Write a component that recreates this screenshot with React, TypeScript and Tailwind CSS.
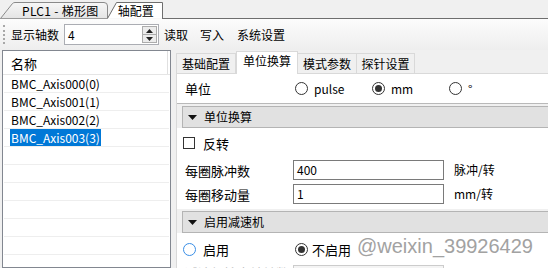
import React from 'react'

const axes = ['BMC_Axis000(0)', 'BMC_Axis001(1)', 'BMC_Axis002(2)', 'BMC_Axis003(3)']
const selected = 3

function Radio({ on, focus }: { on?: boolean; focus?: boolean }) {
  return (
    <span className={`w-[13px] h-[13px] rounded-full border bg-white flex items-center justify-center shrink-0 ${focus ? 'border-[#3a8ee6]' : 'border-[#333333]'}`}>
      {on && <span className="w-[7px] h-[7px] rounded-full bg-[#333333]" />}
    </span>
  )
}

function Triangle() {
  return (
    <svg width="9" height="5" viewBox="0 0 9 5" className="shrink-0">
      <polygon points="0,0 9,0 4.5,5" fill="#111" />
    </svg>
  )
}

function SectionHeader({ title }: { title: string }) {
  return (
    <div className="bg-[#f0f0f0] pl-[5px] pt-[2px]">
      <div className="h-[22px] flex items-center gap-[7px] pl-[5px] border border-r-0 border-[#b4b4b4] bg-[#e1e1e1]">
        <Triangle />
        <span>{title}</span>
      </div>
    </div>
  )
}

function Field({ label, value, unit }: { label: string; value: string; unit: string }) {
  return (
    <div className="h-[24px] flex items-center pl-[8px]">
      <span className="w-[108px] text-[13px]">{label}</span>
      <div className="w-[151px] h-[20px] border border-[#7a7a7a] bg-white flex items-center pl-[3px]">{value}</div>
      <span className="ml-[10px]">{unit}</span>
    </div>
  )
}

export default function App() {
  return (
    <div className="w-[548px] h-[268px] overflow-hidden bg-[#f0f0f0] flex flex-col text-[12px] leading-none text-black font-['Noto_Sans_CJK_SC',sans-serif] relative">
      {/* document tabs */}
      <div className="relative h-[19px] flex shrink-0">
        <svg className="absolute inset-0" width="548" height="19">
          <defs>
            <linearGradient id="t1" x1="0" y1="0" x2="0" y2="1">
              <stop offset="0" stopColor="#f7f7f7" />
              <stop offset="1" stopColor="#e4e4e4" />
            </linearGradient>
          </defs>
          <path d="M0.5,18.5 L12.5,3.5 Q13.5,2.5 15,2.5 L104,2.5 Q107.5,2.5 107.5,6 L107.5,18.5" fill="url(#t1)" stroke="#8a8a8a" />
          <path d="M107.5,18.5 L116.5,2.5 L162.5,2.5 L162.5,18.5" fill="#ffffff" stroke="#6e6e6e" />
          <line x1="162" y1="18.5" x2="548" y2="18.5" stroke="#6e6e6e" />
          <line x1="0" y1="18.5" x2="107" y2="18.5" stroke="#9a9a9a" />
        </svg>
        <span className="relative ml-[22px] mt-[5px] tracking-[0.3px]">PLC1 - 梯形图</span>
        <span className="relative ml-[19px] mt-[5px]">轴配置</span>
      </div>

      {/* toolbar */}
      <div className="h-[31px] shrink-0 flex items-center bg-gradient-to-b from-[#fcfcfc] to-[#eeeeee]">
        <div className="ml-[3px] h-[19px] border-l-2 border-dotted border-[#a8a8a8]" />
        <span className="ml-[6px]">显示轴数</span>
        <div className="ml-[5px] w-[95px] h-[21px] border border-[#abadb3] bg-white flex items-center">
          <span className="flex-1 pl-[3px]">4</span>
          <div className="w-[15px] h-[17px] mr-px border border-[#acacac] bg-[#ececec] flex flex-col">
            <div className="flex-1 flex items-center justify-center border-b border-[#acacac]">
              <svg width="7" height="4"><polygon points="0,4 7,4 3.5,0" fill="#222" /></svg>
            </div>
            <div className="flex-1 flex items-center justify-center">
              <svg width="7" height="4"><polygon points="0,0 7,0 3.5,4" fill="#222" /></svg>
            </div>
          </div>
        </div>
        <span className="ml-[5px]">读取</span>
        <span className="ml-[12px]">写入</span>
        <span className="ml-[13px]">系统设置</span>
      </div>

      <div className="flex-1 flex min-h-0">
        {/* axis list */}
        <div className="ml-[2px] w-[169px] border border-[#828790] bg-white flex flex-col overflow-hidden">
          <div className="h-[24px] shrink-0 flex border-b border-[#e5e5e5]">
            <span className="flex-1 pl-[8px] pt-[6px] text-[13px]">名称</span>
            <div className="w-px mr-[2px] bg-[#e0e0e0]" />
          </div>
          {Array.from({ length: 12 }).map((_, i) => (
            <div key={i} className="h-[18px] shrink-0 mx-px border-b border-[#eeeeee] flex items-center pl-[6px]">
              {axes[i] && (
                <span className={`px-px leading-[17px] ${i === selected ? 'bg-[#0078d7] text-white' : ''}`}>{axes[i]}</span>
              )}
            </div>
          ))}
        </div>

        {/* config panel */}
        <div className="ml-[5px] flex-1 flex flex-col min-w-0">
          <div className="h-[23px] shrink-0 flex items-end relative z-10">
            <div className="w-[60px] h-[20px] border border-b-0 border-[#d9d9d9] bg-[#f0f0f0] flex items-center justify-center">基础配置</div>
            <div className="w-[62px] h-[23px] -mb-px border border-b-0 border-[#d9d9d9] bg-white flex items-center justify-center pb-[4px]">单位换算</div>
            <div className="w-[59px] h-[20px] border border-b-0 border-l-0 border-[#d9d9d9] bg-[#f0f0f0] flex items-center justify-center">模式参数</div>
            <div className="w-[58px] h-[20px] border border-b-0 border-l-0 border-[#d9d9d9] bg-[#f0f0f0] flex items-center justify-center">探针设置</div>
          </div>
          <div className="flex-1 border-t border-l border-[#d9d9d9] bg-white flex flex-col">
            <div className="h-[30px] shrink-0 flex items-center pl-[8px] border-b border-[#b9b9b9]">
              <span className="w-[110px] text-[13px]">单位</span>
              <div className="w-[77px] flex items-center gap-[6px]"><Radio /><span>pulse</span></div>
              <div className="w-[77px] flex items-center gap-[6px]"><Radio on /><span>mm</span></div>
              <div className="w-[77px] flex items-center gap-[6px]"><Radio /><span>°</span></div>
            </div>

            <SectionHeader title="单位换算" />
            <div className="h-[30px] flex items-center pl-[6px] gap-[8px]">
              <span className="w-[12px] h-[12px] border border-[#333333] bg-white" />
              <span className="text-[13px]">反转</span>
            </div>
            <Field label="每圈脉冲数" value="400" unit="脉冲/转" />
            <Field label="每圈移动量" value="1" unit="mm/转" />

            <div className="h-[3px]" />
            <SectionHeader title="启用减速机" />
            <div className="h-[32px] flex items-center pl-[6px]">
              <div className="w-[112px] flex items-center gap-[7px]"><Radio focus /><span className="text-[13px]">启用</span></div>
              <div className="flex items-center gap-[4px]"><Radio on /><span className="text-[13px]">不启用</span></div>
            </div>
            <div className="h-[24px] flex items-start pl-[8px]">
              <span className="w-[108px] text-[13px] text-[#c0c0c0] pt-px">减速机输出轴转数</span>
              <div className="w-[151px] h-[20px] border border-[#cccccc] bg-[#f4f4f4]" />
            </div>
          </div>
        </div>
      </div>

      {/* watermark */}
      <span className="absolute left-[357px] top-[236px] text-[20px] leading-none text-[#a2a2a2] font-['Liberation_Sans',sans-serif]">@weixin_39926429</span>
    </div>
  )
}
